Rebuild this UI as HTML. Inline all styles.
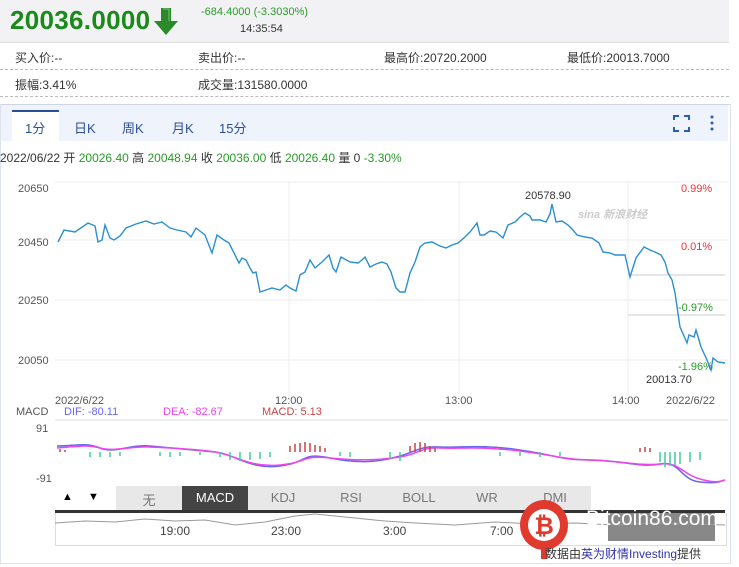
<!DOCTYPE html>
<html><head><meta charset="utf-8"><style>
body{margin:0;width:739px;height:567px;background:#fff;font-family:"Liberation Sans","Noto Sans CJK SC",sans-serif;position:relative;overflow:hidden}
.a{position:absolute;white-space:nowrap}
.s{font-size:12px;color:#333}
.dash{position:absolute;left:0;width:729px;border-top:1px dashed #bbb}
</style></head><body>
<div class="a" style="left:0;top:0;width:729px;height:42px;background:#f2f2f4;border-bottom:1px solid #ddd"></div>
<div class="a" style="left:10px;top:5px;font-size:26px;font-weight:bold;color:#1a8a1a;letter-spacing:0.3px">20036.0000</div>
<svg class="a" style="left:152px;top:7px" width="28" height="30"><path d="M9 1h10v13h7L14 28 2 14h7z" fill="#2a8a2a"/><path d="M11 2h6v12" stroke="#7fc07f" fill="none"/></svg>
<div class="a" style="left:201px;top:6px;font-size:11px;color:#2a9a2a">-684.4000 (-3.3030%)</div>
<div class="a" style="left:240px;top:23px;font-size:11px;color:#333">14:35:54</div>
<div class="a s" style="left:15px;top:49px">买入价:--</div>
<div class="a s" style="left:198px;top:49px">卖出价:--</div>
<div class="a s" style="left:384px;top:49px">最高价:20720.2000</div>
<div class="a s" style="left:567px;top:49px">最低价:20013.7000</div>
<div class="dash" style="top:69px"></div>
<div class="a s" style="left:15px;top:76px">振幅:3.41%</div>
<div class="a s" style="left:198px;top:76px">成交量:131580.0000</div>
<div class="dash" style="top:96px"></div>
<div class="a" style="left:0;top:104px;width:729px;height:458px;border:1px solid #dde3ee;border-top:1px solid #cfd6e3"></div>
<div class="a" style="left:1px;top:105px;width:727px;height:36px;background:#eef3fc"></div>
<div class="a" style="left:12px;top:110px;width:47px;height:31px;background:#fff;border-top:2px solid #2a4f9a"></div>
<div class="a" style="left:25px;top:118px;font-size:13px;color:#2a4f9a">1分</div>
<div class="a" style="left:74px;top:118px;font-size:13px;color:#2a4f9a">日K</div>
<div class="a" style="left:122px;top:118px;font-size:13px;color:#2a4f9a">周K</div>
<div class="a" style="left:172px;top:118px;font-size:13px;color:#2a4f9a">月K</div>
<div class="a" style="left:219px;top:118px;font-size:13px;color:#2a4f9a">15分</div>
<svg class="a" style="left:672px;top:114px" width="50" height="20"><path d="M2 6V2h5M12 2h5v4M17 13v4h-5M7 17H2v-4" stroke="#2a5fb0" stroke-width="2" fill="none"/><circle cx="40" cy="3" r="1.5" fill="#2a5fb0"/><circle cx="40" cy="9" r="1.5" fill="#2a5fb0"/><circle cx="40" cy="15" r="1.5" fill="#2a5fb0"/></svg>
<div class="a" style="left:0;top:149px;font-size:12px;color:#333">2022/06/22 开 <span style="color:#2a9a2a">20026.40</span> 高 <span style="color:#2a9a2a">20048.94</span> 收 <span style="color:#2a9a2a">20036.00</span> 低 <span style="color:#2a9a2a">20026.40</span> 量 0 <span style="color:#2a9a2a">-3.30%</span></div>
<svg class="a" style="left:0;top:0" width="739" height="567">
<g stroke="#eee" fill="none"><path d="M55 182H728M55 240H728M55 300H728M55 360H728M289 182V400M459 182V400M628 182V400"/><path d="M628 275H725M628 315H725" stroke="#ccc"/></g>
<g font-size="11" fill="#555" font-family="Liberation Sans"><text x="18" y="192">20650</text><text x="18" y="246">20450</text><text x="18" y="304">20250</text><text x="18" y="364">20050</text>
<text x="525" y="199" fill="#333">20578.90</text><text x="646" y="383" fill="#333">20013.70</text>
<text x="681" y="192" fill="#e33">0.99%</text><text x="681" y="250" fill="#e33">0.01%</text><text x="678" y="311" fill="#2a9a2a">-0.97%</text><text x="678" y="370" fill="#2a9a2a">-1.96%</text>
<text x="55" y="404">2022/6/22</text><text x="275" y="404">12:00</text><text x="445" y="404">13:00</text><text x="612" y="404">14:00</text><text x="666" y="404">2022/6/22</text>
<text x="16" y="415">MACD</text><text x="64" y="415" fill="#66f">DIF: -80.11</text><text x="163" y="415" fill="#e4e">DEA: -82.67</text><text x="262" y="415" fill="#c44">MACD: 5.13</text>
<text x="36" y="432">91</text><text x="36" y="482">-91</text></g>
<text x="578" y="218" font-size="11" fill="#ccc" font-style="italic" font-weight="bold">sina 新浪财经</text>
<polyline fill="none" stroke="#2a8fd0" stroke-width="1.4" points="58,242 64,230 75,232 88,223 95,226 98,242 102,240 105,225 110,238 114,240 120,236 126,228 136,224 146,221 154,224 162,222 170,228 177,230 186,232 191,237 196,228 205,235 212,253 217,235 224,240 229,243 235,255 239,263 242,258 246,260 250,268 253,273 256,272 260,292 266,290 272,288 280,290 286,285 290,288 296,291 300,275 305,272 310,260 315,268 322,262 329,255 333,268 336,272 341,257 350,262 358,263 362,260 365,257 370,267 376,264 382,262 387,264 391,272 396,288 400,292 405,292 410,273 415,262 420,247 425,243 432,242 440,246 446,248 452,245 458,243 465,237 470,232 477,223 480,235 484,235 490,231 496,232 503,238 508,225 515,222 520,217 525,213 530,216 532,220 540,220 546,222 550,214 552,204 556,222 562,221 568,225 573,230 577,235 585,237 592,238 599,243 603,252 610,253 615,255 625,255 630,277 636,258 644,247 650,250 655,252 661,255 665,262 668,273 672,280 675,293 680,327 684,336 687,343 689,335 694,337 696,330 699,340 701,347 707,360 711,370 713,358 718,362 725,363"/>
<path d="M55 420H728" stroke="#ddd"/>
<g stroke-width="1.5" fill="none"><path d="M57 446C75 446 85 442 100 448S130 444 150 446S195 450 215 452S250 470 280 466S300 452 330 458S380 462 400 456S420 446 440 447S480 444 520 450S560 460 590 460S640 468 660 464S680 480 700 482S720 481 725 480" stroke="#66e"/><path d="M57 448C75 447 85 444 100 448S130 446 150 447S195 449 215 452S250 468 280 465S300 455 330 458S380 460 400 457S420 447 440 448S480 446 520 451S560 459 590 460S640 466 660 464S682 474 700 479S720 481 725 480" stroke="#e4e"/></g>
<g stroke-width="1.5"><path d="M90 452v5M100 452v5M110 452v5M120 452v4M160 452v4M170 452v5M180 452v4M200 452v3M220 452v5M230 452v8M240 452v9M250 452v8M260 452v7M270 452v5M340 452v4M350 452v5M390 452v7M400 452v9M500 452v4M520 452v4M540 452v5M560 452v4M660 452v10M665 452v15M670 452v14M675 452v13M680 452v12M690 452v10M700 452v8" stroke="#4c9"/><path d="M290 452v-6M295 452v-8M300 452v-9M305 452v-10M310 452v-9M315 452v-7M320 452v-6M325 452v-4M410 452v-6M415 452v-9M420 452v-10M425 452v-9M430 452v-6M435 452v-4M640 452v-4M645 452v-5M650 452v-4M60 452v-3M65 452v-2" stroke="#c44"/></g>
</svg>
<div class="a" style="left:55px;top:486px;width:58px;height:24px;background:#fff;font-size:11px"><span style="position:absolute;left:7px;top:5px">▲</span><span style="position:absolute;left:33px;top:5px">▼</span></div>
<div class="a" style="left:116px;top:486px;width:475px;height:24px;background:#e8e8e8;font-size:13px;color:#777">
<span class="a" style="left:0;width:66px;top:4px;text-align:center">无</span>
<span class="a" style="left:66px;width:66px;height:24px;background:#444;color:#fff;line-height:24px;text-align:center">MACD</span>
<span class="a" style="left:134px;width:66px;top:4px;text-align:center">KDJ</span>
<span class="a" style="left:202px;width:66px;top:4px;text-align:center">RSI</span>
<span class="a" style="left:270px;width:66px;top:4px;text-align:center">BOLL</span>
<span class="a" style="left:338px;width:66px;top:4px;text-align:center">WR</span>
<span class="a" style="left:406px;width:66px;top:4px;text-align:center">DMI</span></div>
<div class="a" style="left:55px;top:510px;width:670px;height:3px;background:#333"></div>
<div class="a" style="left:55px;top:513px;width:670px;height:32px;border:1px solid #ddd;border-top:0"></div>
<div class="a" style="left:608px;top:513px;width:107px;height:28px;background:#888"></div>
<svg class="a" style="left:55px;top:513px" width="670" height="32"><polyline fill="none" stroke="#999" points="0,10 30,8 60,9 90,6 120,8 150,7 180,12 210,9 240,3 260,1 300,5 330,8 360,10 400,12 440,9 480,11 520,10 560,12 600,10 640,11 670,12"/></svg>
<div class="a" style="left:160px;top:524px;font-size:12px;color:#444">19:00</div>
<div class="a" style="left:271px;top:524px;font-size:12px;color:#444">23:00</div>
<div class="a" style="left:383px;top:524px;font-size:12px;color:#444">3:00</div>
<div class="a" style="left:490px;top:524px;font-size:12px;color:#444">7:00</div>
<div class="a" style="left:586px;top:507px;font-size:21px;color:#fff">Bitcoin86.com</div>
<svg class="a" style="left:518px;top:497px" width="52" height="64"><ellipse cx="26" cy="28" rx="24" ry="25" fill="#e03a2f"/><path d="M26 50v12" stroke="#e03a2f" stroke-width="6"/><circle cx="26" cy="28" r="16" fill="#fff"/><text x="26" y="37" font-size="24" font-weight="bold" text-anchor="middle" fill="#e03a2f" font-family="Liberation Sans">₿</text></svg>
<div class="a" style="left:545px;top:545px;font-size:12px;color:#333">数据由<span style="color:#33a">英为财情Investing</span>提供</div>
</body></html>
